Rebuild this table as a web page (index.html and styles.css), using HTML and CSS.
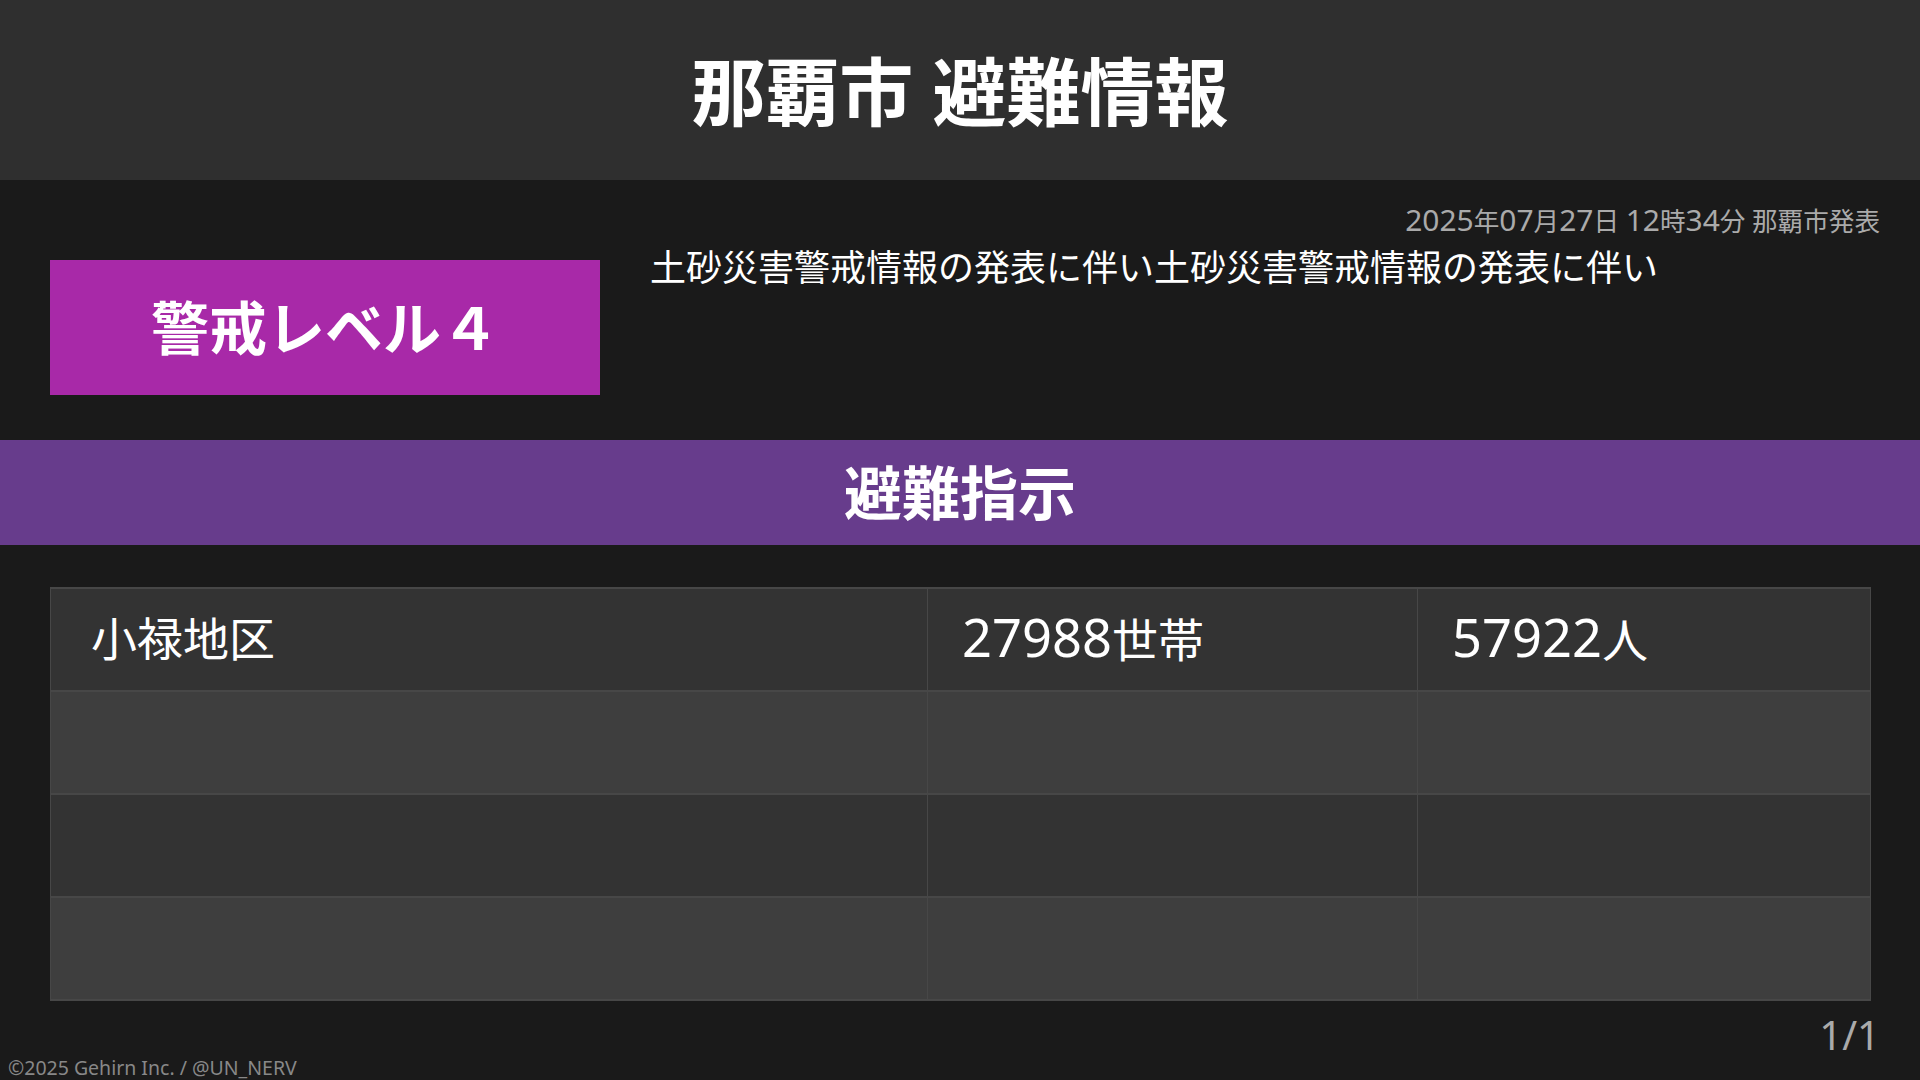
FILE: index.html
```html
<!DOCTYPE html>
<html lang="ja">
<head>
<meta charset="utf-8">
<title>那覇市 避難情報</title>
<link rel="stylesheet" href="styles.css">
</head>
<body>
<div class="page">
  <header class="header">
    <h1 class="title">那覇市 避難情報</h1>
  </header>
  <section class="info">
    <div class="issued"><span class="num">2025</span>年<span class="num">07</span>月<span class="num">27</span>日 <span class="num">12</span>時<span class="num">34</span>分 那覇市発表</div>
    <div class="info-row">
      <div class="level">警戒レベル４</div>
      <p class="desc">土砂災害警戒情報の発表に伴い土砂災害警戒情報の発表に伴い</p>
    </div>
  </section>
  <div class="category">避難指示</div>
  <table class="areas">
    <tr class="odd"><td class="c-area">小禄地区</td><td class="c-house"><span class="num">27988</span>世帯</td><td class="c-people"><span class="num">57922</span>人</td></tr>
    <tr class="even"><td class="c-area"></td><td class="c-house"></td><td class="c-people"></td></tr>
    <tr class="odd"><td class="c-area"></td><td class="c-house"></td><td class="c-people"></td></tr>
    <tr class="even"><td class="c-area"></td><td class="c-house"></td><td class="c-people"></td></tr>
  </table>
  <div class="pager">1/1</div>
  <div class="copyright">©2025 Gehirn Inc. / @UN_NERV</div>
</div>
</body>
</html>
```
FILE: styles.css
```css
html, body {
  margin: 0;
  padding: 0;
  background: #1a1a1a;
}
.page {
  width: 1920px;
  height: 1080px;
  display: flex;
  flex-direction: column;
  background: #1a1a1a;
  color: #ffffff;
  font-family: "Noto Sans", "Noto Sans CJK JP", sans-serif;
  overflow: hidden;
}
.num {
  font-size: 1.17em;
  line-height: 1;
}
.header {
  height: 180px;
  background: #2f2f2f;
  display: flex;
  align-items: center;
  justify-content: center;
  flex: none;
}
.title {
  margin: 0;
  font-size: 74px;
  font-weight: 700;
  line-height: 1;
  padding-top: 4px;
}
.info {
  height: 260px;
  flex: none;
  box-sizing: border-box;
  padding: 25px 40px 0 50px;
  display: flex;
  flex-direction: column;
}
.issued {
  align-self: flex-end;
  font-size: 25.6px;
  line-height: 30px;
  height: 30px;
  color: #aaaaaa;
}
.info-row {
  display: flex;
  gap: 50px;
  margin-top: 11px;
}
.level {
  width: 550px;
  height: 135px;
  margin-top: 14px;
  background: #a829a8;
  display: flex;
  align-items: center;
  justify-content: center;
  font-size: 58px;
  font-weight: 700;
  line-height: 1;
  flex: none;
}
.desc {
  margin: 0;
  font-size: 36px;
  line-height: 44px;
}
.category {
  height: 105px;
  flex: none;
  background: #673c8c;
  display: flex;
  align-items: center;
  justify-content: center;
  font-size: 58px;
  font-weight: 700;
  line-height: 1;
}
.areas {
  margin: 42px 0 0 50px;
  width: 1820px;
  border-collapse: collapse;
  table-layout: fixed;
  flex: none;
}
.areas td {
  height: 103px;
  padding: 0 0 4px 40px;
  border-top: 2px solid #474747;
  border-bottom: 2px solid #474747;
  border-left: 1px solid #474747;
  border-right: 1px solid #474747;
  font-size: 46px;
  line-height: 1;
  vertical-align: middle;
  box-sizing: border-box;
}
.areas tr.odd td { background: #333333; }
.areas tr.even td { background: #3e3e3e; }
.c-area { width: 877px; }
.c-house { width: 490px; }
.c-people { width: 453px; }
.areas td.c-house,
.areas td.c-people { padding-left: 34px; }
.areas .num { font-size: 1.14em; }
.pager {
  align-self: flex-end;
  margin: 14px 40px 0 0;
  font-size: 40px;
  line-height: 40px;
  color: #aaaaaa;
}
.copyright {
  margin: 2px 0 0 8px;
  font-size: 19.5px;
  line-height: 22px;
  color: #888888;
}
```
